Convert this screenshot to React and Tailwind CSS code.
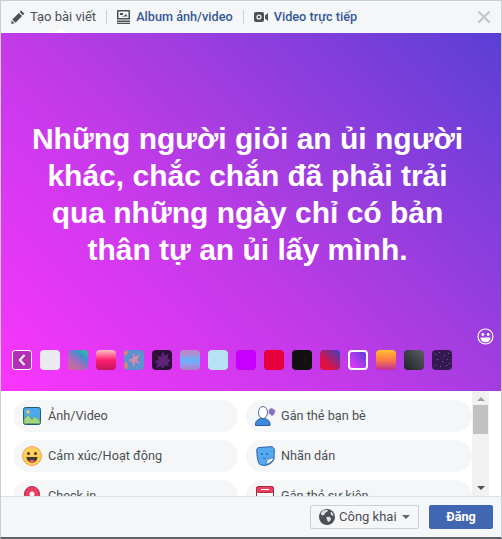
function Pencil() {
  return (
    <svg width="14" height="14" viewBox="0 0 14 14" className="shrink-0">
      <path d="M10.2 0.6l3.2 3.2-1.5 1.5-3.2-3.2zM7.900 2.900l3.200 3.200-6.600 6.600-3.200-3.200zM0.700 10.400l2.900 2.900-3.400 0.600z" fill="#4b4f56" />
    </svg>
  )
}

function AlbumIcon() {
  return (
    <svg width="13" height="14" viewBox="0 0 13 14" className="shrink-0">
      <path fillRule="evenodd" d="M1 0h11a1 1 0 0 1 1 1v8.500H0V1a1 1 0 0 1 1-1zM1.500 1.500v6.500h10V1.500z" fill="#4b4f56" />
      <path d="M3 3h3v2H3zM7.500 5.500l1.500-1.500 1.500 2.500h-6z" fill="#4b4f56" />
      <path d="M0 10.500h13V12H0zM0 12.700h13V14H0z" fill="#4b4f56" />
    </svg>
  )
}

function VideoIcon() {
  return (
    <svg width="14" height="10" viewBox="0 0 14 10" className="shrink-0">
      <rect x="0" y="0" width="10" height="10" rx="2" fill="#4b4f56" />
      <circle cx="5" cy="5" r="2.600" fill="#f5f6f7" />
      <circle cx="5" cy="5" r="1.300" fill="#4b4f56" />
      <path d="M11 3.500l3-2.500v8l-3-2.500z" fill="#4b4f56" />
    </svg>
  )
}

function CloseIcon() {
  return (
    <svg width="14" height="14" viewBox="0 0 14 14" className="shrink-0">
      <path d="M1.500 1.500l11 11M12.500 1.500l-11 11" stroke="#c4c7cc" strokeWidth="2.400" />
    </svg>
  )
}

function Smile() {
  return (
    <svg width="17" height="17" viewBox="0 0 17 17">
      <circle cx="8.500" cy="8.500" r="7.500" fill="none" stroke="#fff" strokeWidth="1.200" />
      <circle cx="5.800" cy="6.500" r="1.400" fill="#fff" />
      <circle cx="11.200" cy="6.500" r="1.400" fill="#fff" />
      <path d="M3.500 9.500h10c0 3-2.200 4.800-5 4.800s-5-1.800-5-4.800z" fill="#fff" />
    </svg>
  )
}

function PhotoIcon() {
  return (
    <svg width="18" height="18" viewBox="0 0 18 18" className="shrink-0">
      <rect x="0.500" y="0.500" width="17" height="17" rx="2" fill="#4aa8ee" stroke="#1f5f70" />
      <circle cx="5" cy="5" r="1.700" fill="#f7d154" />
      <path d="M1 16.500v-4l4-5 4 5 3-3 5 4.500v2.500z" fill="#a5d57f" stroke="#5f9b54" strokeWidth="0.700" />
    </svg>
  )
}

function FeelingIcon() {
  return (
    <svg width="20" height="20" viewBox="0 0 20 20" className="shrink-0">
      <circle cx="10" cy="10" r="9.500" fill="#ffcf5c" stroke="#f7a34b" />
      <circle cx="6.500" cy="7.500" r="1.500" fill="#3e3a35" />
      <circle cx="13.500" cy="7.500" r="1.500" fill="#3e3a35" />
      <path d="M4.500 11h11c0 3.500-2.500 5.500-5.500 5.500S4.500 14.500 4.500 11z" fill="#3e3a35" />
      <path d="M7 14.500c1.800-1 4.200-1 6 0-.8 1.300-1.800 2-3 2s-2.200-.7-3-2z" fill="#ef5a5a" />
    </svg>
  )
}

function PinIcon() {
  return (
    <svg width="16" height="20" viewBox="0 0 16 20" className="shrink-0">
      <path d="M8 0.500a7.500 7.500 0 0 1 7.500 7.500c0 4.500-4.500 8-7.500 11.500C5 16 0.500 12.500 0.500 8A7.500 7.500 0 0 1 8 0.500z" fill="#ea3f5f" stroke="#a92a47" />
      <circle cx="8" cy="8" r="2.500" fill="#fff" />
    </svg>
  )
}

function TagIcon() {
  return (
    <svg width="21" height="20" viewBox="0 0 21 20" className="shrink-0">
      <path d="M14 3.500l2.500-1.500 4 2.500-1.500 4-2 1.500-3.500-3z" fill="#8d6cc4" />
      <path d="M0.500 19.500v-2c0-2.500 3-4.500 5.500-5h3.500c2.500.5 5.500 2.500 5.500 5v2z" fill="#3f88e0" stroke="#2a5da8" />
      <ellipse cx="8" cy="6.500" rx="4.500" ry="6" fill="#fff" stroke="#4b6a90" />
    </svg>
  )
}

function StickerIcon() {
  return (
    <svg width="19" height="20" viewBox="0 0 19 20" className="shrink-0">
      <path d="M3 1.500L15 0.700c2 0 3.300 1.300 3.300 3.300l-.3 9c-1 3-4 5.500-8 6.300-3 .3-6-.3-7-1.800C1.500 14 .8 9 .8 4c0-1.500 1-2.300 2.200-2.500z" fill="#55a9ee" stroke="#2b5fa8" />
      <path d="M18 12c-1 3-4 5.500-8 6.300 0-3 1-4.500 3-5.500s3.500-1 5-.8z" fill="#e8f0f8" stroke="#2b5fa8" strokeWidth="0.700" />
      <circle cx="6" cy="8" r="0.900" fill="#2b5fa8" />
      <circle cx="11" cy="8" r="0.900" fill="#2b5fa8" />
      <path d="M7 12c1 .6 2 .6 3 0" stroke="#2b5fa8" strokeWidth="0.800" fill="none" />
    </svg>
  )
}

function EventIcon() {
  return (
    <svg width="18" height="20" viewBox="0 0 18 20" className="shrink-0">
      <rect x="0.500" y="0.500" width="17" height="18" rx="2" fill="#fff" stroke="#a92a47" />
      <rect x="0.500" y="0.500" width="17" height="6" rx="2" fill="#ea3f5f" stroke="#a92a47" />
      <path d="M5 3.500h8" stroke="#fff" strokeWidth="1" />
    </svg>
  )
}

function GlobeIcon() {
  return (
    <svg width="16" height="16" viewBox="0 0 16 16" className="shrink-0">
      <circle cx="8" cy="8" r="8" fill="#4b4f56" />
      <path d="M3 2.500c2-1.500 5-1.800 6-1-.5 1.500-2.500 1.500-3 3-.5 1.800-2 2-3.500 1.500-1-.5-.5-2.500.5-3.500zM8 8c1.500-.5 3.500 0 4 1.500.3 1.500-1.500 3-2.500 3.500-1 .2-1-1.500-1.500-2.500C7.500 9.500 7 8.500 8 8zM12 2.500c1.500 1 2.500 3 2.500 4.500-1.200 0-2.500-1-3-2.500z" fill="#dfe1e5" />
    </svg>
  )
}

function Leaf() {
  return (
    <svg viewBox="0 0 20 20" className="h-full w-full">
      <path d="M11 1l1.500 4.500 4-1.500-1 5 3.500 1-3 3.500 1 2.500-4.500-.5-1 3.500-2.500-3-5 2.500 1.500-5-3.500-2 4.500-1.500-1-4.500 3.500 1.500z" fill="#5e2378" />
    </svg>
  )
}

function Blossom() {
  return (
    <svg viewBox="0 0 20 20" className="h-full w-full">
      <path d="M9 2l2 5 5-3-3 6 3 4-5-2-1 6-2-6-4-2 5-2z" fill="#d98aa8" />
      <path d="M0 13l3-1 1 5-3 3z" fill="#e0836f" />
      <path d="M0 0h3l1 4-4 2z" fill="#e0836f" />
    </svg>
  )
}

function Stars() {
  return (
    <svg viewBox="0 0 20 20" className="h-full w-full">
      {[[3, 4], [7, 2], [12, 5], [16, 3], [5, 9], [10, 11], [15, 9], [3, 15], [8, 16], [14, 15], [17, 13]].map(([x, y]) => (
        <rect key={`${x}-${y}`} x={x} y={y} width="1" height="1" fill="#7d5c98" />
      ))}
    </svg>
  )
}

const swatches = [
  { cls: 'bg-[#e9ebee]' },
  { cls: 'bg-[linear-gradient(40deg,#d66a8a_0%,#a06fc0_45%,#3f8fd0_70%,#2ad38a_100%)]' },
  { cls: 'bg-[linear-gradient(180deg,#ffc0c8_0%,#ff1f6f_50%,#c4145a_100%)]' },
  { cls: 'bg-[#5a93cf]', art: <Blossom /> },
  { cls: 'bg-[#2c1038]', art: <Leaf /> },
  { cls: 'bg-[linear-gradient(180deg,#b88ac6_0%,#b08fd0_20%,#62b4fb_50%,#8f9cf0_72%,#b07fc0_100%)]' },
  { cls: 'bg-[#b6e3f5]' },
  { cls: 'bg-[#c600ff]' },
  { cls: 'bg-[#e6003c]' },
  { cls: 'bg-[#111111]' },
  { cls: 'bg-[linear-gradient(45deg,#e0103f_30%,#3b3fc0_100%)]' },
  { cls: 'bg-[linear-gradient(45deg,#f038ff,#5a3fd6)] border-2 border-white' },
  { cls: 'bg-[linear-gradient(180deg,#ffc02e_0%,#ff7a45_50%,#c0309a_100%)]' },
  { cls: 'bg-[linear-gradient(45deg,#1f2225,#5a5f66)]' },
  { cls: 'bg-[#35194f]', art: <Stars /> },
]

const actions = [
  { icon: <PhotoIcon />, label: 'Ảnh/Video' },
  { icon: <TagIcon />, label: 'Gắn thẻ bạn bè' },
  { icon: <FeelingIcon />, label: 'Cảm xúc/Hoạt động' },
  { icon: <StickerIcon />, label: 'Nhãn dán' },
  { icon: <PinIcon />, label: 'Check in' },
  { icon: <EventIcon />, label: 'Gắn thẻ sự kiện' },
]

export default function App() {
  return (
    <div className="h-[539px] w-[502px] overflow-hidden border-x border-t border-b-2 border-x-[#c9ccd1] border-t-[#c9ccd1] border-b-[#5f6368] bg-white font-['Roboto',sans-serif] text-[12.700px]">
      <div className="flex h-[32px] items-center bg-[#f5f6f7] px-[10px]">
        <div className="relative flex h-full items-center gap-[5px] text-[13px] text-[#4b4f56]">
          <Pencil />
          <span>Tạo bài viết</span>
          <div className="absolute bottom-0 left-[43px] h-0 w-0 border-x-[7px] border-b-[5px] border-x-transparent border-b-white" />
        </div>
        <div className="mx-[10px] h-[14px] w-px bg-[#ced0d4]" />
        <div className="flex items-center gap-[6px] text-[#365899]">
          <AlbumIcon />
          <span className="font-medium">Album ảnh/video</span>
        </div>
        <div className="mx-[10px] h-[14px] w-px bg-[#ced0d4]" />
        <div className="flex items-center gap-[6px] text-[#365899]">
          <VideoIcon />
          <span className="font-medium">Video trực tiếp</span>
        </div>
        <div className="ml-auto">
          <CloseIcon />
        </div>
      </div>

      <div className="relative flex h-[358px] flex-col bg-[linear-gradient(45deg,#fb35fe_0%,#c43ae9_41%,#a33de0_59%,#5a3fd6_100%)]">
        <div className="pl-[27px] pr-[34px] pt-[87px] text-center font-['Liberation_Sans',Arial,sans-serif] text-[30px] font-bold leading-[37px] text-white">
          Những người giỏi an ủi người khác, chắc chắn đã phải trải qua những ngày chỉ có bản thân tự an ủi lấy mình.
        </div>
        <div className="absolute right-[7px] top-[295px]">
          <Smile />
        </div>
        <div className="mt-auto mb-[21px] flex items-center gap-[8px] pl-[11px]">
          <button className="flex h-[20px] w-[20px] items-center justify-center rounded-[3px] border border-white bg-[#b42fb8]">
            <svg width="8" height="12" viewBox="0 0 8 12">
              <path d="M6.500 1L1.800 6l4.700 5" fill="none" stroke="#fff" strokeWidth="2" />
            </svg>
          </button>
          {swatches.map((s, i) => (
            <div key={i} className={`h-[20px] w-[20px] overflow-hidden rounded-[4px] ${s.cls}`}>
              {s.art}
            </div>
          ))}
        </div>
      </div>

      <div className="flex h-[105px] bg-white">
        <div className="h-full flex-1 overflow-hidden pl-[12px] pt-[9px]">
          <div className="grid grid-cols-[225px_226px] gap-x-[8px] gap-y-[8px]">
            {actions.map(a => (
              <div key={a.label} className="flex h-[32px] items-center gap-[6px] rounded-[16px] bg-[#f5f6f7] pl-[9px] text-[#4b4f56]">
                <div className="flex w-[20px] justify-center">{a.icon}</div>
                <span>{a.label}</span>
              </div>
            ))}
          </div>
        </div>
        <div className="mr-[12px] flex w-[17px] flex-col items-center bg-[#f1f1f1]">
          <div className="mt-[6px] h-0 w-0 border-x-[4px] border-b-[4px] border-x-transparent border-b-[#a3a3a3]" />
          <div className="mt-[4px] h-[29px] w-[15px] bg-[#c1c1c1]" />
          <div className="mt-auto mb-[6px] h-0 w-0 border-x-[4px] border-t-[4px] border-x-transparent border-t-[#505050]" />
        </div>
      </div>

      <div className="flex h-[41px] items-center justify-end gap-[10px] border-t border-[#dddfe2] bg-[#f5f6f7] pr-[8px]">
        <div className="flex h-[24px] w-[109px] items-center gap-[4px] rounded-[2px] border border-[#ccd0d5] bg-[#f5f6f7] pl-[8px] text-[13px] text-[#4b4f56]">
          <GlobeIcon />
          <span>Công khai</span>
          <div className="ml-[1px] h-0 w-0 border-x-[4px] border-t-[4px] border-x-transparent border-t-[#606770]" />
        </div>
        <button className="h-[24px] w-[64px] rounded-[2px] bg-[#4267b2] font-bold text-white">Đăng</button>
      </div>
    </div>
  )
}
